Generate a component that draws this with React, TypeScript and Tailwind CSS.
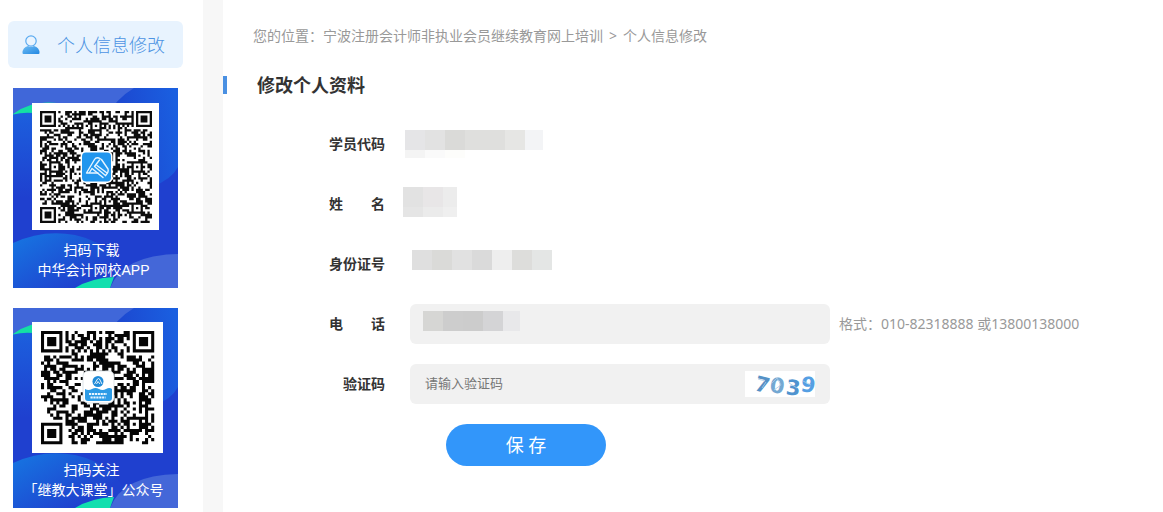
import type { ReactNode } from "react";

type Logo = "app" | "wechat";

function inFinder(x: number, y: number, n: number) {
  return (x < 8 && y < 8) || (x >= n - 8 && y < 8) || (x < 8 && y >= n - 8);
}

function ring(x: number, y: number, cx: number, cy: number) {
  return Math.max(Math.abs(x - cx), Math.abs(y - cy));
}

function modulesPath(n: number, centers: number[][], seed: number) {
  let state = seed;
  let d = "";
  for (let y = 0; y < n; y++) {
    for (let x = 0; x < n; x++) {
      state = (Math.imul(state, 1664525) + 1013904223) >>> 0;
      let dark = (state >>> 16) % 100 < 51;
      if (y === 6) dark = x % 2 === 0;
      if (x === 6) dark = y % 2 === 0;
      for (const [cx, cy] of centers) {
        const r = ring(x, y, cx, cy);
        if (r <= 2) dark = r !== 1;
      }
      if (inFinder(x, y, n)) {
        const cx = x < 8 ? 3 : n - 4;
        const cy = y < 8 ? 3 : n - 4;
        const r = ring(x, y, cx, cy);
        dark = r < 2 || r === 3;
      }
      if (dark) d += `M${x} ${y}h1v1h-1z`;
    }
  }
  return d;
}

const appModules = modulesPath(
  49,
  [[24, 6], [6, 24], [42, 24], [24, 42], [42, 42]],
  20231,
);
const wechatModules = modulesPath(37, [[30, 30]], 7719);

function AppQr() {
  return (
    <svg className="mt-px" width="127" height="127" viewBox="0 0 127 127" role="img" aria-label="APP二维码">
      <rect width="127" height="127" fill="#fff" />
      <g transform="translate(8 8) scale(2.2857)">
        <path d={appModules} fill="#0c0c0c" />
      </g>
      <rect x="48.500" y="48" width="32" height="32" rx="5" fill="#fff" />
      <rect x="50" y="49.500" width="29" height="29" rx="4" fill="#2196ee" />
      <g fill="none" stroke="#e6f5ff" strokeWidth="1.400" strokeLinejoin="round" strokeLinecap="round">
        <path d="M66 70H54.500L62.500 56.500Q64 54 67 55L69.500 56.500L76 66Q77 69 73.500 72.500" />
        <path d="M73.500 72.500L62.500 63.500L67.500 57" />
        <path d="M71 74.500L60 65.500L57.500 69.500" />
        <path d="M65 62.500L75 70" />
      </g>
    </svg>
  );
}

function WechatQr() {
  return (
    <svg width="131" height="131" viewBox="0 0 131 131" role="img" aria-label="公众号二维码">
      <rect width="131" height="131" fill="#fff" />
      <g transform="translate(9 9) scale(3.06)">
        <path d={wechatModules} fill="#050505" />
      </g>
      <rect x="51" y="49" width="31" height="32" rx="5" fill="#fff" stroke="#cfd8de" strokeWidth="0.700" />
      <circle cx="66" cy="59.500" r="5.500" fill="#208bd8" />
      <path d="M62.500 62l3-5q1-1 2 0l2.500 5M64.500 62l1.500-2.500 2 2.500" fill="none" stroke="#fff" strokeWidth="0.900" />
      <path d="M53 67q3.500 2 7 0t7 0 7 0 6 0v9q0 3-3 3H56q-3 0-3-3z" fill="#2c9be6" />
      <g fill="none" stroke="#e8f6ff" strokeWidth="1.800" strokeDasharray="2.200 0.700">
        <path d="M57 72h18" />
        <path d="M58.500 75.500h15" />
      </g>
    </svg>
  );
}

function CardArt({ id }: { id: Logo }) {
  return (
    <svg
      className="absolute inset-0 h-full w-full"
      viewBox="0 0 165 200"
      preserveAspectRatio="none"
      aria-hidden="true"
    >
      <defs>
        <linearGradient id={`${id}-right`} x1="0" y1="0.500" x2="1" y2="0.300">
          <stop offset="0" stopColor="#1d40cb" />
          <stop offset="1" stopColor="#1a5fe0" />
        </linearGradient>
        <linearGradient id={`${id}-left`} x1="0" y1="0" x2="0.800" y2="0.600">
          <stop offset="0" stopColor="#1677e2" />
          <stop offset="1" stopColor="#1f42cf" />
        </linearGradient>
        <linearGradient id={`${id}-edge`} x1="0" y1="0" x2="0" y2="1">
          <stop offset="0" stopColor="#1c5fdd" />
          <stop offset="1" stopColor="#1f40cf" />
        </linearGradient>
      </defs>
      <rect width="165" height="200" fill="#1f40cf" />
      <path d="M90 0H165V79Q158 92 140 98Q100 95 90 0Z" fill={`url(#${id}-right)`} />
      <path d="M0 0H121Q104 10 92 30H0Z" fill="#4067d9" />
      <path d="M0 26Q18 12 44 15L60 32H0Z" fill="#14dfa4" />
      <path d="M0 26.500Q10 24 20 25V110H0Z" fill={`url(#${id}-edge)`} />
      <path d="M0 155Q30 141 62 147Q105 156 120 200H0Z" fill={`url(#${id}-left)`} />
      <path d="M97 200Q110 167 165 166V200Z" fill="#4467d8" />
      <path d="M62 200Q78 190 101 189L97 200Z" fill="#12dfae" />
    </svg>
  );
}

function QrCard({ id, children, lines }: { id: Logo; children: ReactNode; lines: [string, string] }) {
  return (
    <div className="relative mx-[5px] h-[200px] overflow-hidden">
      <CardArt id={id} />
      <div className="relative text-center font-['Liberation_Sans','Noto_Sans_CJK_SC',sans-serif] text-sm leading-5 whitespace-nowrap text-white">
        <div className="h-[152px] pt-[14px] pl-[19px]">{children}</div>
        <p className="pr-2">{lines[0]}</p>
        <p className="pr-1">{lines[1]}</p>
      </div>
    </div>
  );
}

function UserIcon() {
  return (
    <svg width="18" height="20" viewBox="0 0 18 20" aria-hidden="true">
      <defs>
        <linearGradient id="user-body" x1="0" y1="0" x2="1" y2="1">
          <stop offset="0" stopColor="#6fbcf3" />
          <stop offset="1" stopColor="#2388e2" />
        </linearGradient>
      </defs>
      <path d="M0.500 18Q0.500 12.500 6 11Q9 12.800 12 11Q17.500 12.500 17.500 18Q17.500 19 16.500 19H1.500Q0.500 19 0.500 18Z" fill="url(#user-body)" />
      <circle cx="9" cy="6" r="5.200" fill="#eaf4fe" stroke="#5aaaf0" strokeWidth="1.200" />
    </svg>
  );
}

function Captcha() {
  return (
    <svg className="overflow-visible" width="70" height="26" viewBox="0 0 70 26" role="img" aria-label="验证码图片">
      <rect width="70" height="26" fill="#fff" />
      <g fontFamily="DejaVu Sans, sans-serif" fontWeight="700" fontSize="21">
        <text x="10" y="21" fill="#5591c6" transform="rotate(14 17 14)">7</text>
        <text x="25" y="22" fill="#74a8d2" transform="rotate(8 32 14)">0</text>
        <text x="41" y="24" fill="#4f93cf" transform="rotate(6 48 16)">3</text>
        <text x="56" y="21" fill="#559fe3" transform="rotate(8 62 14)">9</text>
      </g>
      <path d="M13 8l7 2M17 17l4-6M27 12l5-5 4 7-7 5M44 12l8 5M58 10l8 4" stroke="#a9cae6" strokeWidth="0.800" fill="none" />
    </svg>
  );
}

function Row({ label, htmlFor, children }: { label: string; htmlFor?: string; children: ReactNode }) {
  const style = "w-[162px] shrink-0 text-right text-sm font-bold whitespace-pre text-[#333]";
  return (
    <div className="flex h-10 items-center gap-[18px]">
      {htmlFor ? (
        <label htmlFor={htmlFor} className={style}>{label}</label>
      ) : (
        <span className={style}>{label}</span>
      )}
      {children}
    </div>
  );
}

export default function App() {
  return (
    <div className="flex min-h-screen bg-[#f7f7f7] font-['Noto_Sans','Noto_Sans_CJK_SC',sans-serif]">
      <aside className="mr-5 w-[203px] shrink-0 bg-white pt-[21px] pr-5 pb-1 pl-2">
        <a
          href="#profile"
          className="flex h-[47px] items-center gap-[17px] rounded-md bg-[#e8f3fe] pl-[14px] text-lg font-light whitespace-nowrap text-[#4d93e3]"
        >
          <UserIcon />
          个人信息修改
        </a>
        <div className="mt-5 flex flex-col gap-5">
          <QrCard id="app" lines={["扫码下载", "中华会计网校APP"]}>
            <AppQr />
          </QrCard>
          <QrCard id="wechat" lines={["扫码关注", "「继教大课堂」公众号"]}>
            <WechatQr />
          </QrCard>
        </div>
      </aside>

      <main className="min-w-0 flex-1 bg-white pt-[26px]">
        <nav className="pl-[30px] text-sm leading-5 text-[#999]">
          您的位置：<a href="#home">宁波注册会计师非执业会员继续教育网上培训</a>
          <span className="mx-1.5">&gt;</span>
          个人信息修改
        </nav>
        <h1 className="mt-[30px] flex items-center gap-[30px] text-lg leading-[18px] font-bold text-[#333]">
          <span className="h-[18px] w-1 bg-[#4a90e2]" />
          修改个人资料
        </h1>

        <form className="mt-[30px] flex flex-col gap-5" onSubmit={(e) => e.preventDefault()}>
          <Row label="学员代码">
            <div className="ml-0.5">
              <div className="flex h-5">
                <span className="w-5 bg-[#e5e5e7]" />
                <span className="w-5 bg-[#e2e2e2]" />
                <span className="w-5 bg-[#dadad8]" />
                <span className="w-10 bg-[#dfdfdd]" />
                <span className="w-5 bg-[#e6e6e4]" />
                <span className="w-[18px] bg-[#f3f4f6]" />
              </div>
              <div className="flex h-2">
                <span className="w-5 bg-[#f4f4f4]" />
                <span className="w-5 bg-[#fafafa]" />
                <span className="w-5 bg-[#fdfdfb]" />
              </div>
            </div>
          </Row>
          <Row label="姓　　名">
            <div className="-mt-1">
              <div className="flex h-5">
                <span className="w-5 bg-[#e2e2e2]" />
                <span className="w-5 bg-[#e8e6e7]" />
                <span className="w-[14px] bg-[#ececec]" />
              </div>
              <div className="flex h-[10px]">
                <span className="w-5 bg-[#e5e5e5]" />
                <span className="w-5 bg-[#ebebeb]" />
                <span className="w-[14px] bg-[#efefef]" />
              </div>
            </div>
          </Row>
          <Row label="身份证号">
            <div className="-mt-2 ml-[9px] flex h-5">
              <span className="w-5 bg-[#dfdfdf]" />
              <span className="w-5 bg-[#dadad8]" />
              <span className="w-5 bg-[#e1e1e1]" />
              <span className="w-5 bg-[#dadada]" />
              <span className="w-5 bg-[#eeeeee]" />
              <span className="w-5 bg-[#dddddb]" />
              <span className="w-5 bg-[#e4e6e5]" />
            </div>
          </Row>
          <Row label="电　　话" htmlFor="phone">
            <div className="relative ml-[7px] w-[420px]">
              <input
                id="phone"
                type="tel"
                className="block h-10 w-full rounded-md bg-[#f1f1f1] px-[15px] text-[13px] text-[#333] outline-none"
              />
              <div className="pointer-events-none absolute top-[7px] left-[13px] flex h-5">
                <span className="w-5 bg-[#d6d6d4]" />
                <span className="w-5 bg-[#cdcdcd]" />
                <span className="w-5 bg-[#cccccc]" />
                <span className="w-5 bg-[#d4d4d6]" />
                <span className="w-[17px] bg-[#e8e8ea]" />
              </div>
            </div>
            <span className="-ml-[9px] text-sm whitespace-nowrap text-[#999]">格式：010-82318888 或13800138000</span>
          </Row>
          <Row label="验证码" htmlFor="code">
            <div className="ml-[7px] flex h-10 w-[420px] items-center rounded-md bg-[#f1f1f1] px-[15px]">
              <input
                id="code"
                type="text"
                placeholder="请输入验证码"
                className="min-w-0 flex-1 bg-transparent text-[13px] text-[#333] outline-none placeholder:text-[#777]"
              />
              <Captcha />
            </div>
          </Row>
          <button
            type="submit"
            className="ml-[223px] h-[42px] w-40 rounded-full bg-[#3296fa] text-lg text-white"
          >
            保 存
          </button>
        </form>
      </main>
    </div>
  );
}
